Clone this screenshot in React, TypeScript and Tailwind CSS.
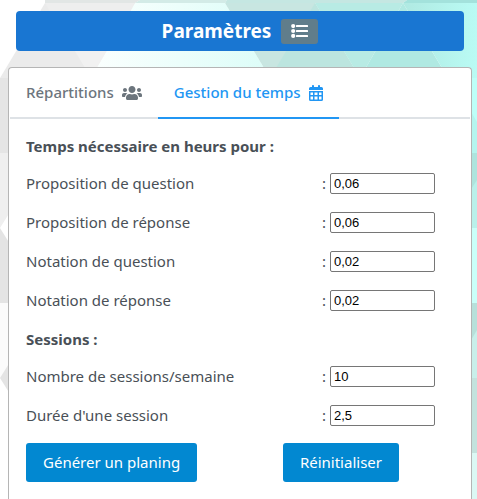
import { useState } from "react";
import { FaUsers } from "react-icons/fa";

type FieldProps = { id: string; label: string; initial: string };

function Field({ id, label, initial }: FieldProps) {
  const [value, setValue] = useState(initial);
  return (
    <div className="flex h-[39px] items-center pr-[19px]">
      <label htmlFor={id} className="flex-1">
        {label}
      </label>
      <span className="mr-1">:</span>
      <input
        id={id}
        type="text"
        value={value}
        onChange={(e) => setValue(e.target.value)}
        className="h-[21px] w-[105px] rounded-xs border border-[#767676] bg-white px-[3px] font-['Liberation_Sans',Arial,sans-serif] text-[13px] text-black"
      />
    </div>
  );
}

function ListIcon() {
  return (
    <svg
      aria-hidden="true"
      width="17"
      height="14"
      viewBox="0 0 17 14"
      fill="currentColor"
    >
      <circle cx="2.2" cy="2.1" r="2.1" />
      <circle cx="2.2" cy="7" r="2.1" />
      <circle cx="2.2" cy="11.9" r="2.1" />
      <rect x="5" y="1" width="12" height="2" rx="0.5" />
      <rect x="5" y="6" width="12" height="2" rx="0.5" />
      <rect x="5" y="11" width="12" height="2" rx="0.5" />
    </svg>
  );
}

function CalendarIcon() {
  return (
    <svg
      aria-hidden="true"
      width="14"
      height="16"
      viewBox="0 0 14 16"
      fill="currentColor"
    >
      <path
        fillRule="evenodd"
        d="M3 .7a.8.8 0 0 1 .8-.7h.4a.8.8 0 0 1 .8.7V2h4V.7a.8.8 0 0 1 .8-.7h.4a.8.8 0 0 1 .8.7V2h1.5A1.5 1.5 0 0 1 14 3.5V5H0V3.500A1.5 1.5 0 0 1 1.500 2H3ZM0 6H14V14.500A1.500 1.500 0 0 1 12.500 16H1.500A1.500 1.500 0 0 1 0 14.500ZM1.500 7.500V10H4V7.500ZM5.500 7.500V10H8.500V7.500ZM10 7.500V10H12.500V7.500ZM1.500 11.500V14.500H4V11.500ZM5.500 11.500V14.500H8.500V11.500ZM10 11.500V14.500H12.500V11.500Z"
      />
    </svg>
  );
}

function Backdrop() {
  return (
    <svg
      aria-hidden="true"
      className="absolute inset-0 -z-10 h-full w-full"
      viewBox="0 0 477 499"
      preserveAspectRatio="none"
    >
      <defs>
        <linearGradient id="aqua" x1="0" x2="1" y1="0" y2="0">
          <stop offset="0" stopColor="#fbfffe" />
          <stop offset="1" stopColor="#dcfdf8" />
        </linearGradient>
        <linearGradient id="teal" x1="0" x2="1" y1="0" y2="0">
          <stop offset="0" stopColor="#b0e9e2" />
          <stop offset="1" stopColor="#b9fbf4" />
        </linearGradient>
      </defs>
      <rect width="477" height="499" fill="#ffffff" />
      <path d="M45 3H135L91 78H0Z" fill="#ebebeb" />
      <path d="M75 51H107L91 78Z" fill="#f1f1f1" />
      <path d="M135 3H225L270 78H91Z" fill="url(#aqua)" />
      <path d="M225 3H315L360 78H270Z" fill="#c8e6e1" />
      <path d="M315 3L360 78H270Z" fill="#bce5df" />
      <path d="M315 3H403L360 78Z" fill="#b8ebe4" />
      <path d="M403 3L448 78H360Z" fill="#b0e9e2" />
      <path d="M403 3H477V78H448Z" fill="url(#teal)" />
      <path d="M45 3H135L130 12H50Z" fill="#eeeeee" />
      <path d="M45 0H140L135 3H45Z" fill="#e2e6e5" />
      <path d="M140 0H227L225 3H135Z" fill="#d3ebe7" />
      <path d="M227 0H407L403 3H225Z" fill="#c5e7e2" />
      <path d="M407 0H477V3H403Z" fill="#a3e2dc" />
      <path d="M0 78H10V153H0Z" fill="#e5e5e5" />
      <path d="M0 153H10V228H0Z" fill="#efefef" />
      <path d="M0 228H10V303H0Z" fill="#e4e4e4" />
      <path d="M10 212V244L0 228Z" fill="#ffffff" />
      <path d="M0 303H10V378H0Z" fill="#fbfbfb" />
      <path d="M10 362V394L0 378Z" fill="#e4e4e4" />
      <path d="M470 78H477V153H470Z" fill="#bdfff8" />
      <path d="M470 110L477 122V153H470Z" fill="#b4f5ee" />
      <path d="M470 153H477V228H470Z" fill="#b9f0ea" />
      <path d="M470 153H477V180L470 191Z" fill="#ade4dd" />
      <path d="M470 228H477V303H470Z" fill="#c9fff9" />
      <path d="M470 303H477V378H470Z" fill="#c8efea" />
      <path d="M470 303H477V330L470 342Z" fill="#b7e0da" />
      <path d="M470 378H477V453H470Z" fill="#c3e2dd" />
      <path d="M470 453H477V499H470Z" fill="#dbf8f4" />
    </svg>
  );
}

const tab =
  "-mb-[2px] flex h-[51px] items-center gap-2 border-b-2 px-4 font-medium";
const action = "h-[39px] rounded-[3px] bg-[#0288d1] px-[17px] text-white";

export default function App() {
  return (
    <div className="relative isolate flex min-h-screen flex-col overflow-hidden pt-[11px] font-['Noto_Sans','Segoe_UI',sans-serif] text-[15px] text-[#495057]">
      <Backdrop />
      <header className="mr-[13px] ml-4 flex h-10 items-center justify-center gap-[10px] rounded-[4px] bg-[#1976d2] text-white">
        <h1 className="text-[19px] font-bold">Paramètres</h1>
        <button
          type="button"
          aria-label="Liste"
          className="flex h-[25px] w-[37px] items-center justify-center rounded-[3px] bg-[#607d8b]"
        >
          <ListIcon />
        </button>
      </header>

      <main className="mt-4 mr-[5px] ml-2 flex-1 rounded-t-[4px] border border-b-0 border-[#b5b5b5] bg-white pb-4">
        <nav role="tablist" className="mx-px flex border-b-2 border-[#dee2e6]">
          <button
            type="button"
            role="tab"
            aria-selected="false"
            className={tab + " border-[#dee2e6] text-[#6c757d]"}
          >
            Répartitions <FaUsers className="h-4 w-5" />
          </button>
          <button
            type="button"
            role="tab"
            aria-selected="true"
            className={tab + " border-[#2196f3] text-[#2196f3]"}
          >
            Gestion du temps <CalendarIcon />
          </button>
        </nav>

        <section className="px-[17px] pt-4">
          <h2 className="h-[29px] font-bold">Temps nécessaire en heurs pour :</h2>
          <Field id="pq" label="Proposition de question" initial="0,06" />
          <Field id="pr" label="Proposition de réponse" initial="0,06" />
          <Field id="nq" label="Notation de question" initial="0,02" />
          <Field id="nr" label="Notation de réponse" initial="0,02" />
          <h2 className="mt-2 h-[29px] font-bold">Sessions :</h2>
          <Field id="ns" label="Nombre de sessions/semaine" initial="10" />
          <Field id="ds" label="Durée d'une session" initial="2,5" />
          <div className="mt-2 flex justify-between pr-[55px]">
            <button type="button" className={action}>
              Générer un planing
            </button>
            <button type="button" className={action}>
              Réinitialiser
            </button>
          </div>
        </section>
      </main>
    </div>
  );
}
